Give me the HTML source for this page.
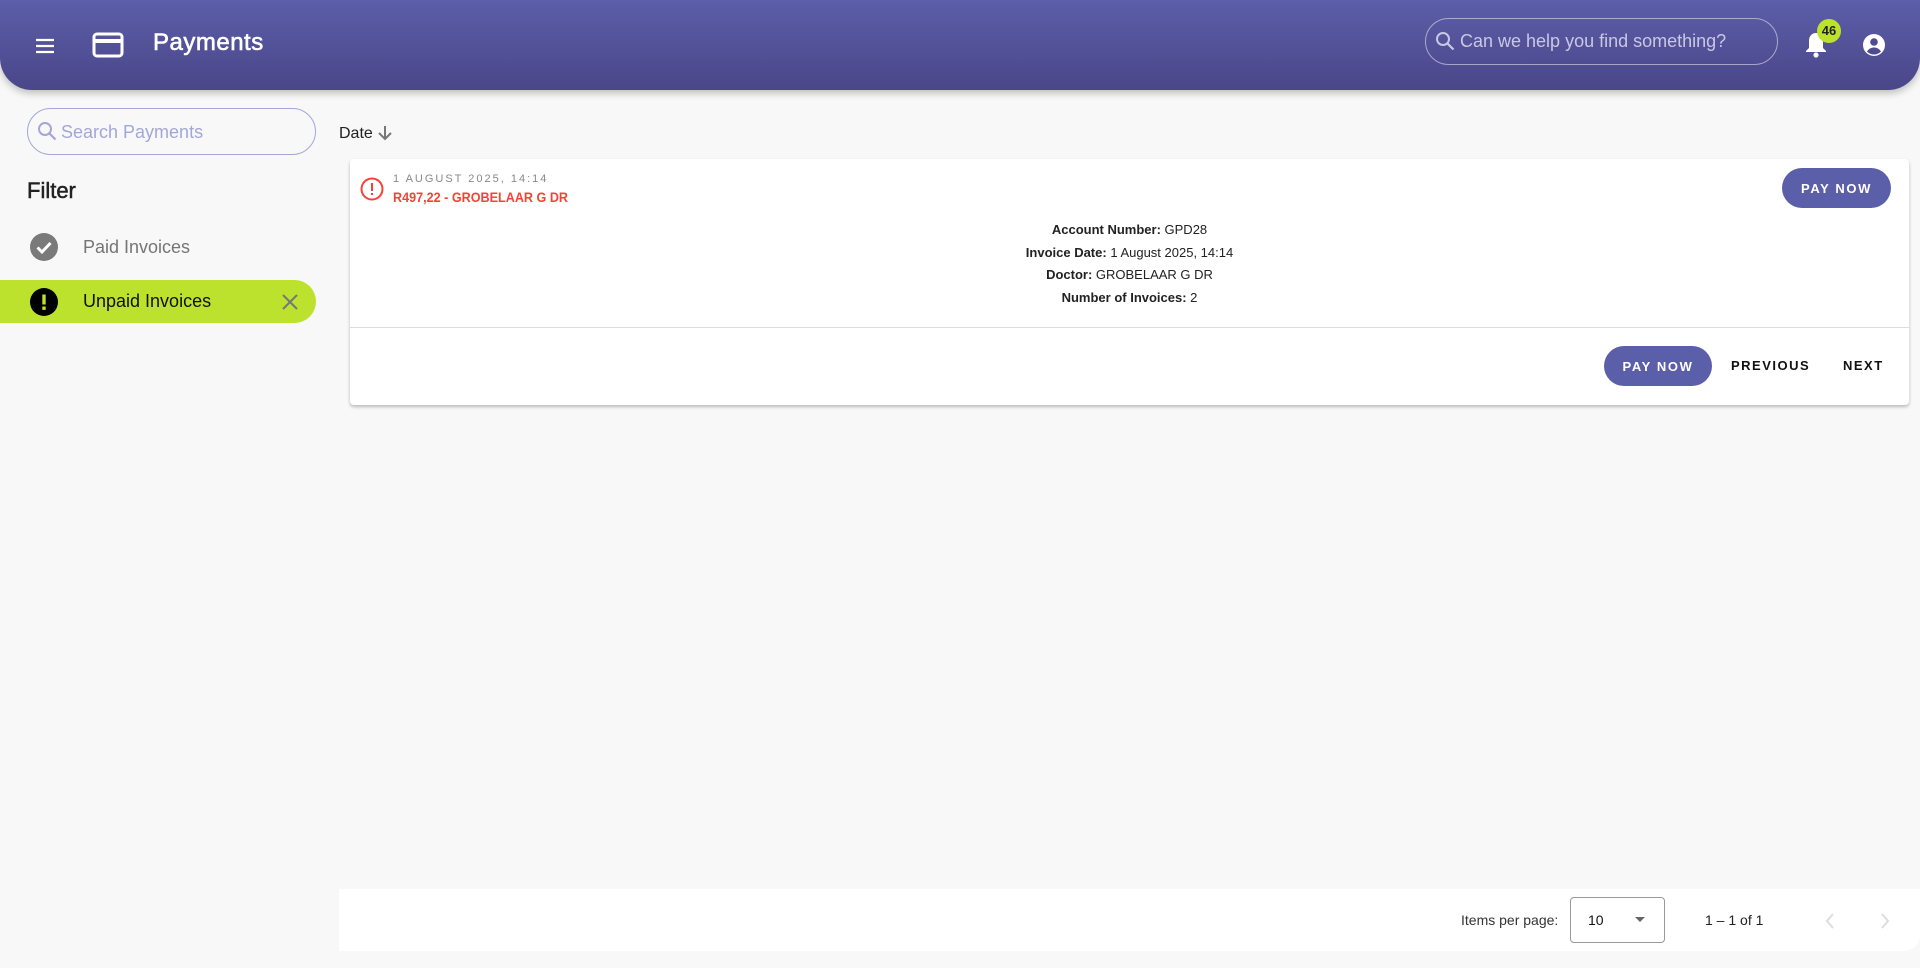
<!DOCTYPE html>
<html><head><meta charset="utf-8"><style>
*{box-sizing:border-box;margin:0;padding:0}
body{width:1920px;height:968px;background:#f8f8f8;font-family:"Liberation Sans",sans-serif;position:relative;overflow:hidden}
.abs{position:absolute}
.hdr{left:0;top:0;width:1920px;height:90px;background:linear-gradient(#5c5ea9,#4a4689);border-radius:0 0 32px 32px;box-shadow:0 3px 8px rgba(0,0,0,.25)}
.btn{background:#5b5ea8;color:#fff;border-radius:20px;font-size:13px;font-weight:bold;letter-spacing:1.6px;display:flex;align-items:center;justify-content:center}
.det{left:350px;width:1559px;text-align:center;font-size:13px;color:#222}
.det b{font-weight:bold}
</style></head><body>
<div class="abs hdr"></div>
<svg class="abs" style="left:33px;top:34px" width="24" height="24" viewBox="0 0 24 24"><path d="M3 6h18M3 12h18M3 18h18" stroke="#fff" stroke-width="2.2"/></svg>
<svg class="abs" style="left:92px;top:31px" width="32" height="28" viewBox="0 0 32 28"><rect x="2" y="3" width="28" height="22" rx="3" fill="none" stroke="#fff" stroke-width="3"/><rect x="2" y="8" width="28" height="4" fill="#fff"/></svg>
<div class="abs" style="left:153px;top:29px;color:#fff;font-size:24px;-webkit-text-stroke:.6px #fff;letter-spacing:.5px">Payments</div>
<div class="abs" style="left:1425px;top:18px;width:353px;height:47px;border:1px solid rgba(255,255,255,.5);border-radius:24px"></div>
<svg class="abs" style="left:1433px;top:29px" width="24" height="24" viewBox="0 0 24 24"><circle cx="10" cy="10" r="6" fill="none" stroke="#c8c8e4" stroke-width="2"/><path d="M14.5 14.5l6 6" stroke="#c8c8e4" stroke-width="2.2"/></svg>
<div class="abs" style="left:1460px;top:31px;color:#c8c8e4;font-size:18px">Can we help you find something?</div>
<svg class="abs" style="left:1803px;top:30px" width="26" height="30" viewBox="0 0 26 30"><path d="M13 3c-4.5 0-7 3.5-7 8v7l-3 3v1h20v-1l-3-3v-7c0-4.5-2.5-8-7-8z" fill="#fff"/><circle cx="13" cy="25" r="2.6" fill="#fff"/></svg>
<div class="abs" style="left:1817px;top:19px;width:24px;height:24px;border-radius:50%;background:#bde22e;color:#222;font-size:13px;font-weight:bold;text-align:center;line-height:24px">46</div>
<svg class="abs" style="left:1862px;top:33px" width="24" height="24" viewBox="0 0 24 24"><circle cx="12" cy="12" r="11" fill="#fff"/><circle cx="12" cy="9" r="3.8" fill="#4e4b90"/><path d="M5 18.5c2-3 4.5-4 7-4s5 1 7 4c-2 2-4.5 3-7 3s-5-1-7-3z" fill="#4e4b90"/></svg>

<div class="abs" style="left:27px;top:108px;width:289px;height:47px;border:1px solid #a3a6d8;border-radius:24px"></div>
<svg class="abs" style="left:35px;top:119px" width="24" height="24" viewBox="0 0 24 24"><circle cx="10" cy="10" r="6" fill="none" stroke="#a3a6d8" stroke-width="2"/><path d="M14.5 14.5l6 6" stroke="#a3a6d8" stroke-width="2.2"/></svg>
<div class="abs" style="left:61px;top:122px;color:#a3a6d8;font-size:18px">Search Payments</div>
<div class="abs" style="left:27px;top:178px;font-size:22px;color:#222;-webkit-text-stroke:.5px #222">Filter</div>
<svg class="abs" style="left:30px;top:233px" width="28" height="28" viewBox="0 0 28 28"><circle cx="14" cy="14" r="14" fill="#7a7a7a"/><path d="M7.5 14.5l4.5 4.5 8.5-9" fill="none" stroke="#fff" stroke-width="3"/></svg>
<div class="abs" style="left:83px;top:237px;color:#757575;font-size:18px">Paid Invoices</div>
<div class="abs" style="left:0;top:280px;width:316px;height:43px;background:#bde22e;border-radius:0 22px 22px 0"></div>
<svg class="abs" style="left:30px;top:288px" width="28" height="28" viewBox="0 0 28 28"><circle cx="14" cy="14" r="14" fill="#000"/><rect x="12.3" y="6.5" width="3.4" height="10" fill="#bde22e"/><rect x="12.3" y="18.5" width="3.4" height="3.4" fill="#bde22e"/></svg>
<div class="abs" style="left:83px;top:291px;color:#111;font-size:18px">Unpaid Invoices</div>
<svg class="abs" style="left:281px;top:293px" width="18" height="18" viewBox="0 0 18 18"><path d="M2 2l14 14M16 2L2 16" stroke="#777" stroke-width="2"/></svg>

<div class="abs" style="left:339px;top:125px;font-size:16px;color:#222">Date</div>
<svg class="abs" style="left:376px;top:124px" width="18" height="18" viewBox="0 0 18 18"><path d="M9 2v13M3 9l6 6 6-6" fill="none" stroke="#777" stroke-width="2"/></svg>

<div class="abs" style="left:350px;top:159px;width:1559px;height:246px;background:#fff;border-radius:4px;box-shadow:0 2px 3px rgba(0,0,0,.25)"></div>
<div class="abs" style="left:350px;top:327px;width:1559px;height:1px;background:#ddd"></div>
<svg class="abs" style="left:360px;top:177px" width="24" height="24" viewBox="0 0 24 24"><circle cx="12" cy="12" r="10.5" fill="none" stroke="#f44336" stroke-width="2"/><rect x="11" y="6" width="2" height="8" fill="#f44336"/><rect x="11" y="16" width="2" height="2" fill="#f44336"/></svg>
<div class="abs" style="left:393px;top:173px;font-size:11px;letter-spacing:2px;color:#888">1 AUGUST 2025, 14:14</div>
<div class="abs" style="left:393px;top:189px;font-size:14px;font-weight:bold;color:#f44336;transform:scaleX(.9);transform-origin:left">R497,22 - GROBELAAR G DR</div>
<div class="abs btn" style="left:1782px;top:168px;width:109px;height:40px">PAY NOW</div>
<div class="abs det" style="top:222px"><b>Account Number:</b> GPD28</div>
<div class="abs det" style="top:245px"><b>Invoice Date:</b> 1 August 2025, 14:14</div>
<div class="abs det" style="top:267px"><b>Doctor:</b> GROBELAAR G DR</div>
<div class="abs det" style="top:290px"><b>Number of Invoices:</b> 2</div>
<div class="abs btn" style="left:1604px;top:346px;width:108px;height:40px">PAY NOW</div>
<div class="abs" style="left:1731px;top:358px;font-size:13px;font-weight:bold;letter-spacing:1.5px;color:#111">PREVIOUS</div>
<div class="abs" style="left:1843px;top:358px;font-size:13px;font-weight:bold;letter-spacing:1.5px;color:#111">NEXT</div>

<div class="abs" style="left:339px;top:889px;width:1581px;height:62px;background:#fff;border-radius:0 0 16px 0"></div>
<div class="abs" style="left:1461px;top:912px;font-size:14px;color:#333">Items per page:</div>
<div class="abs" style="left:1570px;top:897px;width:95px;height:46px;border:1px solid #999;border-radius:4px"></div>
<div class="abs" style="left:1588px;top:912px;font-size:14px;color:#111">10</div>
<svg class="abs" style="left:1634px;top:915px" width="12" height="8" viewBox="0 0 12 8"><path d="M1 2h10L6 7z" fill="#666"/></svg>
<div class="abs" style="left:1705px;top:912px;font-size:14px;color:#222">1 – 1 of 1</div>
<svg class="abs" style="left:1820px;top:909px" width="20" height="24" viewBox="0 0 20 24"><path d="M13 5l-6 7 6 7" fill="none" stroke="#ddd" stroke-width="2"/></svg>
<svg class="abs" style="left:1875px;top:909px" width="20" height="24" viewBox="0 0 20 24"><path d="M7 5l6 7-6 7" fill="none" stroke="#ddd" stroke-width="2"/></svg>
</body></html>
